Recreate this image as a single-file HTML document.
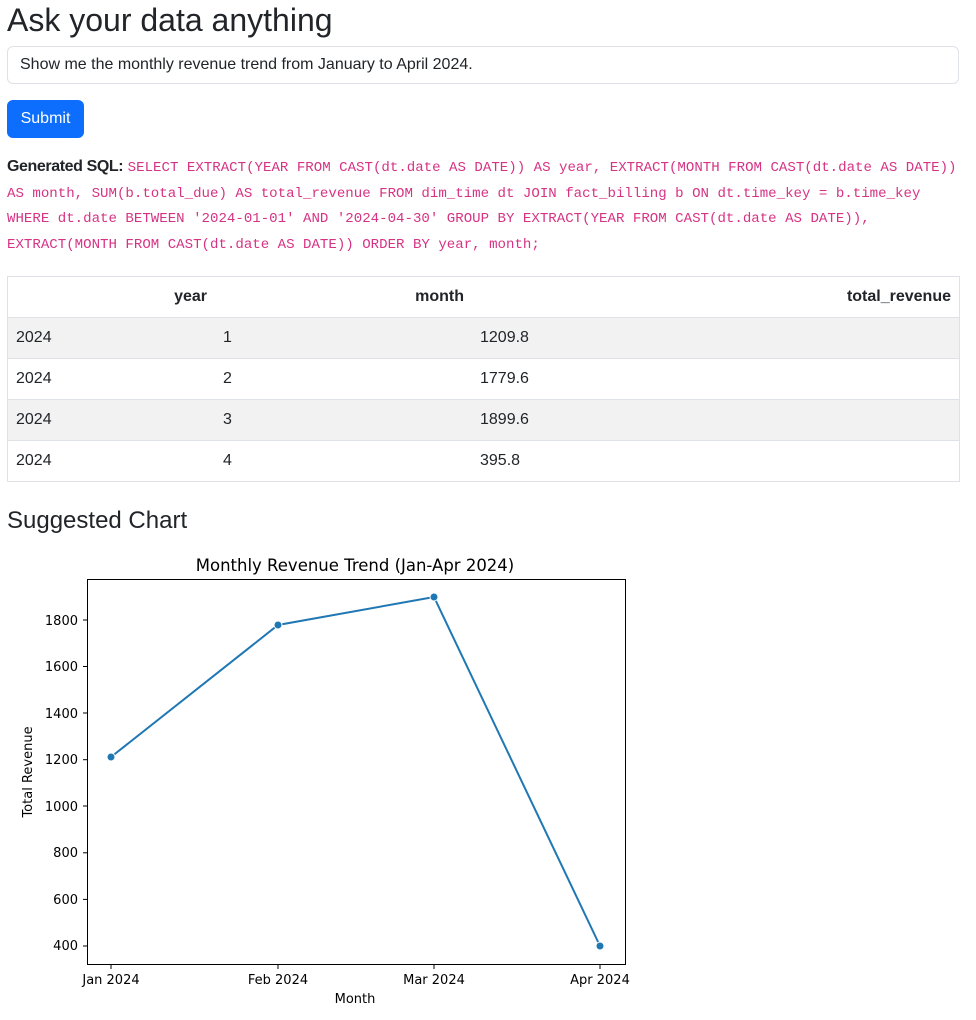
<!DOCTYPE html>
<html><head><meta charset="utf-8">
<style>
body{margin:0;font-family:"Liberation Sans",sans-serif;color:#212529;font-size:16px;background:#fff}
.wrap{padding:0 7px 0 7px;width:952px}
h1{font-size:32px;font-weight:500;margin:0;line-height:40px;height:46px}
.inp{height:36px;border:1px solid #dee2e6;border-radius:6px;line-height:36px;padding-left:12px;font-size:16px}
.btn{margin-top:16px;width:77px;height:38px;background:#0d6efd;color:#fff;border-radius:6px;line-height:38px;text-align:center}
.sql{margin-top:17px;line-height:24.5px;white-space:nowrap}
.sql b{font-weight:700;letter-spacing:-0.4px}
code{font-family:"Liberation Mono",monospace;font-size:14.1px;color:#d63384}
table{margin-top:19px;border-collapse:collapse;width:953px}
td,th{border-top:1px solid #dee2e6;height:40px;padding:0 8px;text-align:left}
table{border:1px solid #dee2e6}
th{text-align:right;font-weight:700}
tr.o td{background:#f2f2f2}
h3{font-size:24px;font-weight:500;margin:24px 0 0 0;line-height:30px}
</style></head><body>
<div class="wrap">
<h1>Ask your data anything</h1>
<div class="inp">Show me the monthly revenue trend from January to April 2024.</div>
<div class="btn">Submit</div>
<div class="sql"><b>Generated SQL:</b> <code>SELECT EXTRACT(YEAR FROM CAST(dt.date AS DATE)) AS year, EXTRACT(MONTH FROM CAST(dt.date AS DATE))<br>AS month, SUM(b.total_due) AS total_revenue FROM dim_time dt JOIN fact_billing b ON dt.time_key = b.time_key<br>WHERE dt.date BETWEEN '2024-01-01' AND '2024-04-30' GROUP BY EXTRACT(YEAR FROM CAST(dt.date AS DATE)),<br>EXTRACT(MONTH FROM CAST(dt.date AS DATE)) ORDER BY year, month;</code></div>
<table>
<tr><th style="width:191px">year</th><th style="width:241px">month</th><th>total_revenue</th></tr>
<tr class="o"><td>2024</td><td>1</td><td>1209.8</td></tr>
<tr><td>2024</td><td>2</td><td>1779.6</td></tr>
<tr class="o"><td>2024</td><td>3</td><td>1899.6</td></tr>
<tr><td>2024</td><td>4</td><td>395.8</td></tr>
</table>
<h3>Suggested Chart</h3>
</div>
<svg width="976" height="480" style="position:absolute;left:0;top:540px" font-family="DejaVu Sans, sans-serif">
<g transform="translate(0,-540)">
<text x="355" y="571" font-size="16.5" text-anchor="middle" fill="#000">Monthly Revenue Trend (Jan-Apr 2024)</text>
<rect x="87.5" y="579.5" width="538" height="385" fill="none" stroke="#000" stroke-width="1"/>
<g font-size="13" fill="#000" text-anchor="end">
<text x="78" y="625">1800</text><text x="78" y="671">1600</text><text x="78" y="718">1400</text><text x="78" y="764">1200</text><text x="78" y="811">1000</text><text x="78" y="857">800</text><text x="78" y="904">600</text><text x="78" y="950">400</text>
</g>
<g stroke="#000"><line x1="83" x2="87" y1="620" y2="620"/><line x1="83" x2="87" y1="666.5" y2="666.5"/><line x1="83" x2="87" y1="713" y2="713"/><line x1="83" x2="87" y1="759.7" y2="759.7"/><line x1="83" x2="87" y1="806" y2="806"/><line x1="83" x2="87" y1="852.8" y2="852.8"/><line x1="83" x2="87" y1="899.4" y2="899.4"/><line x1="83" x2="87" y1="946" y2="946"/>
<line x1="111" x2="111" y1="965" y2="969"/><line x1="278" x2="278" y1="965" y2="969"/><line x1="434" x2="434" y1="965" y2="969"/><line x1="600" x2="600" y1="965" y2="969"/></g>
<g font-size="13" fill="#000" text-anchor="middle">
<text x="111" y="984">Jan 2024</text><text x="278" y="984">Feb 2024</text><text x="434" y="984">Mar 2024</text><text x="600" y="984">Apr 2024</text>
<text x="355" y="1003">Month</text>
<text transform="translate(32,772) rotate(-90)">Total Revenue</text>
</g>
<polyline points="111,757 278,625 434,597 600,946" fill="none" stroke="#1f77b4" stroke-width="2"/>
<g fill="#1f77b4" stroke="#fff" stroke-width="1"><circle cx="111" cy="757" r="4"/><circle cx="278" cy="625" r="4"/><circle cx="434" cy="597" r="4"/><circle cx="600" cy="946" r="4"/></g>
</g></svg>
</body></html>
